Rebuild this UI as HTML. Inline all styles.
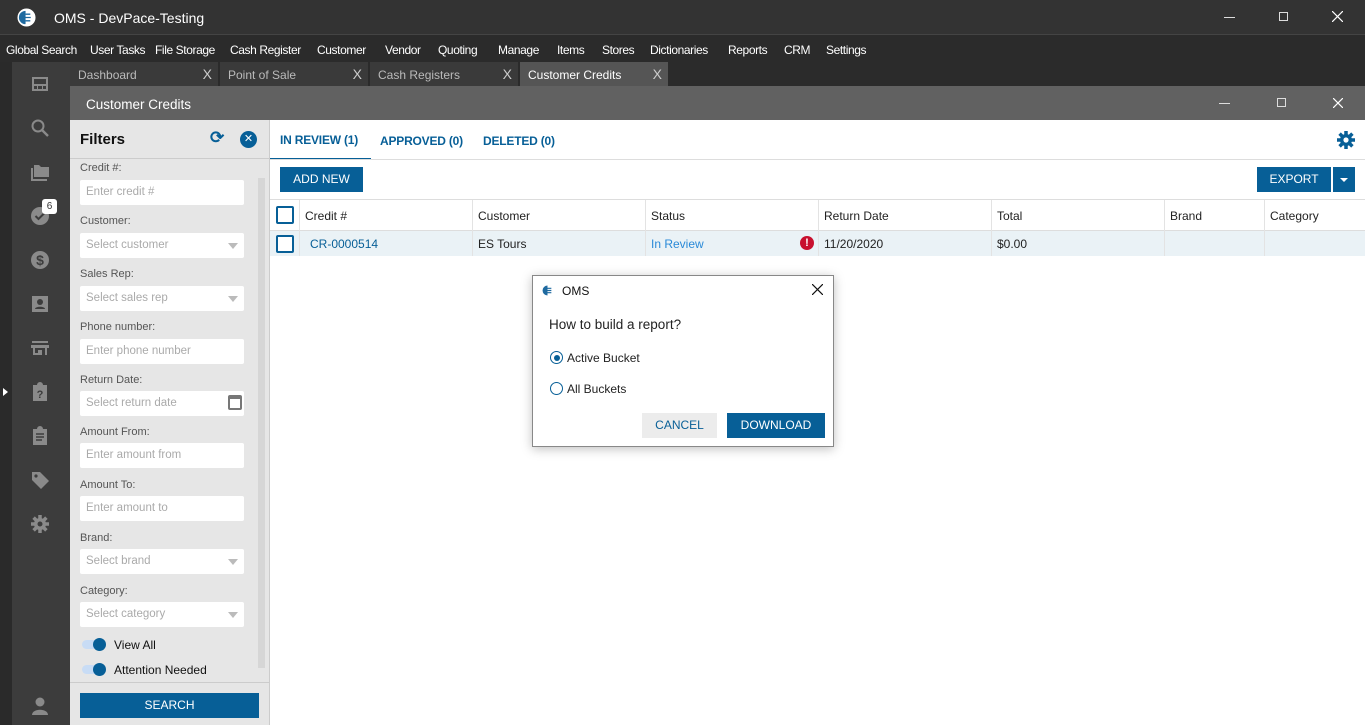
<!DOCTYPE html>
<html><head><style>
*{box-sizing:border-box;margin:0;padding:0}
body{width:1365px;height:725px;overflow:hidden;font-family:"Liberation Sans",sans-serif;font-size:12px;background:#fff;position:relative}
.a{position:absolute}
.menu span{position:absolute;top:43px;color:#fff;font-size:12px;white-space:nowrap;letter-spacing:-.4px}
.tab{position:absolute;top:62px;height:24px;width:149px;background:#3a3a3a;color:#bbb;font-size:12px;padding:6px 8px;border-right:1px solid #2b2b2b}
.tab b{position:absolute;right:6px;top:4px;font-weight:normal;font-size:14px;color:#ccc}
.lbl{position:absolute;left:80px;color:#555;font-size:11px}
.inp{position:absolute;left:80px;width:164px;height:25px;background:#fff;border-radius:2px;color:#aaa;font-size:11.5px;padding:6px 6px}
.dd::after{content:"";position:absolute;right:6px;top:10px;border:5px solid transparent;border-top:6px solid #bbb}
.ic{position:absolute;left:30px;width:20px;height:20px;fill:#8a8a8a}
.col{position:absolute;top:200px;height:56px;border-left:1px solid #e3e3e3}
.h{position:absolute;top:209px;font-size:12px;color:#222}
.c{position:absolute;top:237px;font-size:12px;color:#222}
</style></head><body>
<div class="a" style="left:0;top:0;width:1365px;height:34px;background:#333"></div>
<div class="a" style="left:0;top:34px;width:1365px;height:1px;background:#444"></div>
<svg class="a" style="left:17px;top:8px" width="19" height="19" viewBox="0 0 20 20"><circle cx="10" cy="10" r="9.5" fill="#fff"/><path d="M9 3a7 7 0 1 0 0 14z" fill="#1f6aa0"/><path d="M9 6.5h5M8 10h6.5M9 13.5h5" stroke="#1f6aa0" stroke-width="1.4"/></svg>
<div class="a" style="left:54px;top:10px;color:#fff;font-size:14px">OMS - DevPace-Testing</div>
<div class="a" style="left:1224px;top:17px;width:11px;height:1px;background:#ddd"></div>
<div class="a" style="left:1279px;top:12px;width:9px;height:9px;border:1px solid #ddd"></div>
<svg class="a" style="left:1332px;top:11px" width="11" height="11"><path d="M0 0L11 11M11 0L0 11" stroke="#fff" stroke-width="1.2"/></svg>
<div class="a" style="left:0;top:35px;width:1365px;height:27px;background:#2b2b2b"></div>
<div class="menu"><span style="left:6px">Global Search</span><span style="left:90px">User Tasks</span><span style="left:155px">File Storage</span><span style="left:230px">Cash Register</span><span style="left:317px">Customer</span><span style="left:385px">Vendor</span><span style="left:438px">Quoting</span><span style="left:498px">Manage</span><span style="left:557px">Items</span><span style="left:602px">Stores</span><span style="left:650px">Dictionaries</span><span style="left:728px">Reports</span><span style="left:784px">CRM</span><span style="left:826px">Settings</span></div>
<div class="a" style="left:0;top:62px;width:12px;height:663px;background:#2a2a2a"></div>
<div class="a" style="left:12px;top:62px;width:58px;height:663px;background:#3c3c3c"></div>
<div class="a" style="left:70px;top:62px;width:1295px;height:24px;background:#2b2b2b"></div>
<div class="a" style="left:3px;top:388px;border:4px solid transparent;border-left:5px solid #fff"></div>
<svg class="ic" style="top:74px" viewBox="0 0 20 20"><path d="M2 3h16v14H2z M4 5v5h12V5z M4 12v3h3v-3z M8 12v3h4v-3z M13 12v3h3v-3z" fill-rule="evenodd"/></svg>
<svg class="ic" style="top:118px" viewBox="0 0 20 20"><circle cx="8" cy="8" r="5.5" fill="none" stroke="#8a8a8a" stroke-width="2"/><path d="M12 12l6 6" stroke="#8a8a8a" stroke-width="2.4"/></svg>
<svg class="ic" style="top:162px" viewBox="0 0 20 20"><path d="M1 6h2v11h14v2H1z M4 3h5l2 2h8v10H4z"/></svg>
<svg class="ic" style="top:206px" viewBox="0 0 20 20"><circle cx="10" cy="10" r="9"/><path d="M5.5 10l3 3 6-6" stroke="#3c3c3c" stroke-width="2" fill="none"/></svg>
<div class="a" style="left:42px;top:199px;width:15px;height:15px;background:#fff;border-radius:3px;font-size:10px;text-align:center;line-height:15px;color:#333">6</div>
<svg class="ic" style="top:250px" viewBox="0 0 20 20"><circle cx="10" cy="10" r="9"/><text x="10" y="15" font-size="14" text-anchor="middle" fill="#3c3c3c" font-family="Liberation Sans" font-weight="bold">$</text></svg>
<svg class="ic" style="top:294px" viewBox="0 0 20 20"><path d="M2 2h16v16H2z"/><circle cx="10" cy="8" r="3" fill="#3c3c3c"/><path d="M5 15c0-3 10-3 10 0z" fill="#3c3c3c"/></svg>
<svg class="ic" style="top:338px" viewBox="0 0 20 20"><path d="M2 3h16v2H2z M1 7h18v3H1z M3 10h2v7H3z M15 10h2v7h-2z M8 12h4v5H8z M5 15h3v2H5z"/></svg>
<svg class="ic" style="top:382px" viewBox="0 0 20 20"><path d="M3 3h4a3 3 0 0 1 6 0h4v16H3z"/><text x="10" y="16" font-size="11" text-anchor="middle" fill="#3c3c3c" font-family="Liberation Sans" font-weight="bold">?</text></svg>
<svg class="ic" style="top:426px" viewBox="0 0 20 20"><path d="M3 3h4a3 3 0 0 1 6 0h4v16H3z"/><path d="M6 8h8M6 11h8M6 14h6" stroke="#3c3c3c" stroke-width="1.5"/></svg>
<svg class="ic" style="top:470px" viewBox="0 0 20 20"><path d="M2 2h8l9 9-8 8-9-9z"/><circle cx="6" cy="6" r="1.6" fill="#3c3c3c"/></svg>
<svg class="ic" style="top:514px" viewBox="0 0 20 20"><circle cx="10" cy="10" r="6"/><path d="M10 1v18M1 10h18M3.6 3.6l12.8 12.8M16.4 3.6L3.6 16.4" stroke="#8a8a8a" stroke-width="3.5"/><circle cx="10" cy="10" r="2.5" fill="#3c3c3c"/></svg>
<svg class="ic" style="top:696px" viewBox="0 0 20 20"><circle cx="10" cy="6" r="4.5"/><path d="M2 19c0-7 16-7 16 0z"/></svg>
<div class="tab" style="left:70px">Dashboard<b>X</b></div>
<div class="tab" style="left:220px">Point of Sale<b>X</b></div>
<div class="tab" style="left:370px">Cash Registers<b>X</b></div>
<div class="tab" style="left:520px;background:#555;color:#fff">Customer Credits<b>X</b></div>
<div class="a" style="left:70px;top:86px;width:1295px;height:34px;background:#616161"></div>
<div class="a" style="left:86px;top:97px;color:#fff;font-size:13.5px">Customer Credits</div>
<div class="a" style="left:1219px;top:103px;width:11px;height:1px;background:#ddd"></div>
<div class="a" style="left:1277px;top:98px;width:9px;height:9px;border:1px solid #ddd"></div>
<svg class="a" style="left:1333px;top:98px" width="10" height="10"><path d="M0 0L10 10M10 0L0 10" stroke="#fff" stroke-width="1.2"/></svg>
<div class="a" style="left:70px;top:120px;width:200px;height:605px;background:#e6e6e6"></div>
<div class="a" style="left:70px;top:158px;width:200px;height:1px;background:#ccc"></div>
<div class="a" style="left:80px;top:131px;font-size:15px;font-weight:bold;color:#111">Filters</div>
<div class="a" style="left:210px;top:128px;color:#075f97;font-size:17px;font-weight:bold">⟳</div>
<div class="a" style="left:240px;top:131px;width:17px;height:17px;border-radius:50%;background:#075f97;color:#fff;font-size:11px;text-align:center;line-height:17px">✕</div>
<div class="a" style="left:258px;top:178px;width:7px;height:490px;background:#d6d6d6"></div>
<div class="lbl" style="top:162px">Credit #:</div><div class="inp" style="top:180px">Enter credit #</div>
<div class="lbl" style="top:215px">Customer:</div><div class="inp dd" style="top:233px">Select customer</div>
<div class="lbl" style="top:268px">Sales Rep:</div><div class="inp dd" style="top:286px">Select sales rep</div>
<div class="lbl" style="top:321px">Phone number:</div><div class="inp" style="top:339px">Enter phone number</div>
<div class="lbl" style="top:374px">Return Date:</div><div class="inp" style="top:391px">Select return date<span class="a" style="right:2px;top:4px;width:14px;height:15px;border:2px solid #777;border-top-width:4px;border-radius:2px"></span></div>
<div class="lbl" style="top:426px">Amount From:</div><div class="inp" style="top:443px">Enter amount from</div>
<div class="lbl" style="top:479px">Amount To:</div><div class="inp" style="top:496px">Enter amount to</div>
<div class="lbl" style="top:532px">Brand:</div><div class="inp dd" style="top:549px">Select brand</div>
<div class="lbl" style="top:585px">Category:</div><div class="inp dd" style="top:602px">Select category</div>
<div class="a" style="left:82px;top:640px;width:22px;height:9px;border-radius:5px;background:#c8dcf5"></div><div class="a" style="left:93px;top:638px;width:13px;height:13px;border-radius:50%;background:#075f97"></div>
<div class="a" style="left:114px;top:638px;color:#111">View All</div>
<div class="a" style="left:82px;top:665px;width:22px;height:9px;border-radius:5px;background:#c8dcf5"></div><div class="a" style="left:93px;top:663px;width:13px;height:13px;border-radius:50%;background:#075f97"></div>
<div class="a" style="left:114px;top:663px;color:#111">Attention Needed</div>
<div class="a" style="left:70px;top:682px;width:200px;height:1px;background:#ccc"></div>
<div class="a" style="left:80px;top:693px;width:179px;height:25px;background:#075f97;color:#fff;text-align:center;line-height:25px">SEARCH</div>
<div class="a" style="left:269px;top:120px;width:1px;height:605px;background:#ccc"></div>
<div class="a" style="left:280px;top:133px;color:#075f97;font-weight:bold;font-size:12px;letter-spacing:-.2px">IN REVIEW (1)</div>
<div class="a" style="left:380px;top:134px;color:#075f97;font-weight:bold;font-size:12px;letter-spacing:-.2px">APPROVED (0)</div>
<div class="a" style="left:483px;top:134px;color:#075f97;font-weight:bold;font-size:12px;letter-spacing:-.2px">DELETED (0)</div>
<div class="a" style="left:270px;top:158px;width:101px;height:2px;background:#075f97"></div>
<div class="a" style="left:270px;top:159px;width:1095px;height:1px;background:#ddd"></div>
<svg class="a" style="left:1336px;top:130px" width="20" height="20" viewBox="0 0 20 20"><circle cx="10" cy="10" r="6" fill="#075f97"/><path d="M10 1v18M1 10h18M3.6 3.6l12.8 12.8M16.4 3.6L3.6 16.4" stroke="#075f97" stroke-width="3.5"/><circle cx="10" cy="10" r="2.6" fill="#fff"/></svg>
<div class="a" style="left:280px;top:167px;width:83px;height:25px;background:#075f97;color:#fff;text-align:center;line-height:25px">ADD NEW</div>
<div class="a" style="left:1257px;top:167px;width:74px;height:25px;background:#075f97;color:#fff;text-align:center;line-height:25px">EXPORT</div>
<div class="a" style="left:1333px;top:167px;width:22px;height:25px;background:#075f97"></div>
<div class="a" style="left:1340px;top:178px;border:4px solid transparent;border-top:4px solid #fff"></div>
<div class="a" style="left:270px;top:199px;width:1095px;height:1px;background:#ddd"></div>
<div class="a" style="left:270px;top:230px;width:1095px;height:26px;background:#eaf2f6;border-top:1px solid #ddd"></div>
<div class="col" style="left:299px"></div><div class="col" style="left:472px"></div><div class="col" style="left:645px"></div><div class="col" style="left:818px"></div><div class="col" style="left:991px"></div><div class="col" style="left:1164px"></div><div class="col" style="left:1264px"></div>
<div class="a" style="left:276px;top:206px;width:18px;height:18px;border:2px solid #075f97;border-radius:2px;background:#fff"></div>
<div class="a" style="left:276px;top:235px;width:18px;height:18px;border:2px solid #075f97;border-radius:2px;background:#fff"></div>
<div class="h" style="left:305px">Credit #</div><div class="h" style="left:478px">Customer</div><div class="h" style="left:651px">Status</div><div class="h" style="left:824px">Return Date</div><div class="h" style="left:997px">Total</div><div class="h" style="left:1170px">Brand</div><div class="h" style="left:1270px">Category</div>
<div class="c" style="left:310px;color:#075f97">CR-0000514</div><div class="c" style="left:478px">ES Tours</div><div class="c" style="left:651px;color:#2a8ad8">In Review</div>
<div class="a" style="left:800px;top:236px;width:14px;height:14px;border-radius:50%;background:#c8102e;color:#fff;font-size:11px;font-weight:bold;text-align:center;line-height:14px">!</div>
<div class="c" style="left:824px">11/20/2020</div><div class="c" style="left:997px">$0.00</div>
<div class="a" style="left:532px;top:275px;width:302px;height:172px;background:#fff;border:1px solid #888;box-shadow:0 2px 10px rgba(0,0,0,.25)"></div>
<svg class="a" style="left:542px;top:285px" width="11" height="11" viewBox="0 0 20 20"><path d="M10 1a9 9 0 1 0 0 18z" fill="#1f6aa0"/><path d="M10 6h7M9 10h8M10 14h7" stroke="#1f6aa0" stroke-width="2.2"/></svg>
<div class="a" style="left:562px;top:284px;font-size:12px;color:#111">OMS</div>
<svg class="a" style="left:812px;top:284px" width="11" height="11"><path d="M0 0L11 11M11 0L0 11" stroke="#111" stroke-width="1.2"/></svg>
<div class="a" style="left:549px;top:317px;font-size:13.5px;color:#222">How to build a report?</div>
<div class="a" style="left:550px;top:351px;width:13px;height:13px;border:1px solid #075f97;border-radius:50%"></div><div class="a" style="left:553.5px;top:354.5px;width:6px;height:6px;background:#075f97;border-radius:50%"></div>
<div class="a" style="left:567px;top:351px;color:#222">Active Bucket</div>
<div class="a" style="left:550px;top:382px;width:13px;height:13px;border:1px solid #075f97;border-radius:50%"></div>
<div class="a" style="left:567px;top:382px;color:#222">All Buckets</div>
<div class="a" style="left:642px;top:413px;width:75px;height:25px;background:#ececec;color:#075f97;text-align:center;line-height:25px">CANCEL</div>
<div class="a" style="left:727px;top:413px;width:98px;height:25px;background:#075f97;color:#fff;text-align:center;line-height:25px">DOWNLOAD</div>
</body></html>
